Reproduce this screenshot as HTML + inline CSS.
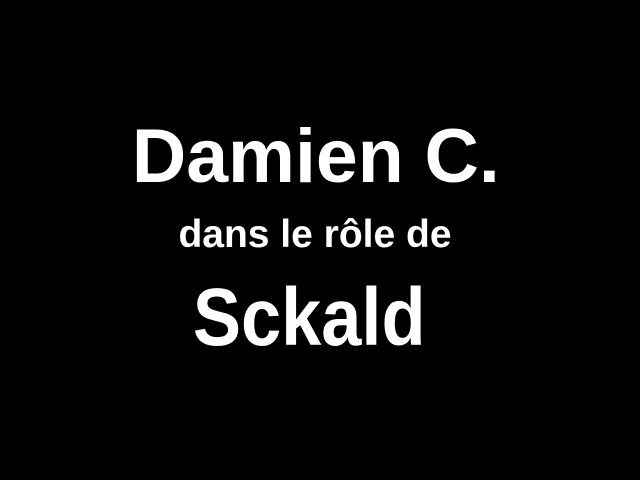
<!DOCTYPE html>
<html><head><style>
html,body{margin:0;padding:0;background:#000;width:640px;height:480px;overflow:hidden}
div{position:absolute;left:0;width:640px;text-align:center;color:#fff;font-family:"Liberation Sans",sans-serif;font-weight:bold;line-height:1;white-space:nowrap}
span{display:inline-block}
</style></head><body>
<div style="top:119px;font-size:76px;"><span style="transform:scaleX(0.99);margin-left:-8px">Damien C.</span></div>
<div style="top:215px;font-size:39px;"><span style="margin-left:-10px">dans le rôle de</span></div>
<div style="top:277px;font-size:82px;"><span style="transform:scaleX(0.88);margin-left:-22px">Sckald</span></div>
</body></html>
